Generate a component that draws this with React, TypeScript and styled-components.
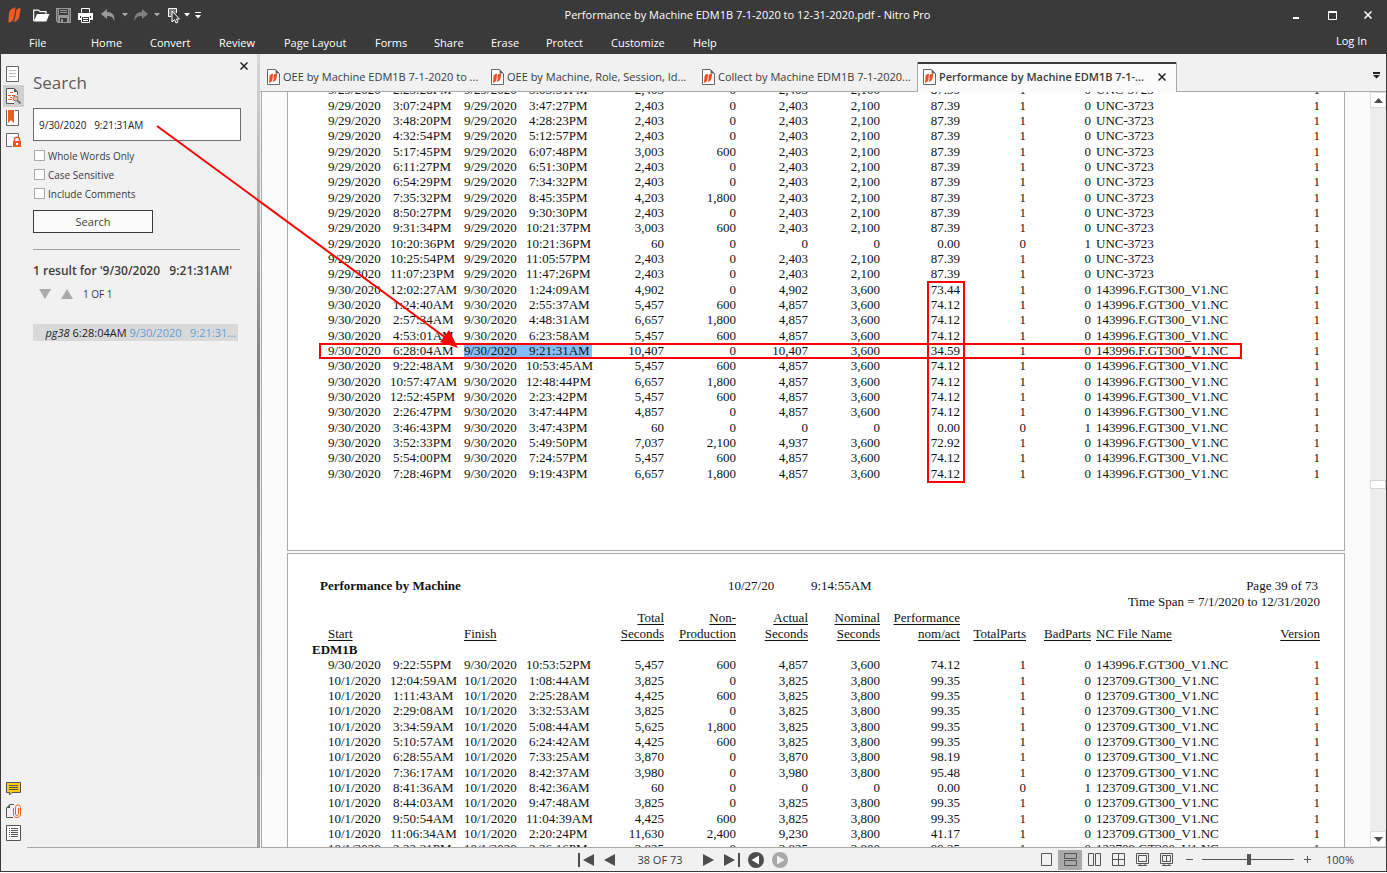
import React from "react";
import styled, { createGlobalStyle, css } from "styled-components";

const GlobalStyle = createGlobalStyle`
  * { box-sizing: border-box; }
  html, body, #root { height: 100%; }
  body { margin: 0; font-family: "Open Sans", "Noto Sans", sans-serif; font-size: 11px; color: #3b3b3c; overflow: hidden; }
  button, input { font: inherit; color: inherit; }
  button { border: 0; background: none; padding: 0; }
`;

const Window = styled.div`
  position: relative;
  display: flex;
  flex-direction: column;
  height: calc(100vh - 1px);
  border: 1px solid #3a3a3b;
  border-top: 0;
  background: #f1f1f1;
`;
const Header = styled.header`
  flex: none;
  height: 54px;
  background: #3a3a3b;
  color: #fff;
`;
const TitleBar = styled.div`
  display: grid;
  grid-template-columns: 308px 1fr 200px;
  align-items: center;
  height: 30px;
`;
const QuickTools = styled.div`
  display: flex;
  align-items: center;
  height: 30px;
`;
const ToolButton = styled.button<{ $w: number }>`
  width: ${(p) => p.$w}px;
  height: 22px;
  display: flex;
  align-items: center;
  justify-content: center;
`;
const Title = styled.div`
  padding-bottom: 2px;
  text-align: center;
  white-space: nowrap;
`;
const WindowButtons = styled.div`
  display: flex;
  justify-content: flex-end;
`;
const MenuBar = styled.nav`
  display: flex;
  align-items: center;
  height: 24px;
  padding: 0 19px 0 28px;
  white-space: nowrap;
`;
const MenuItem = styled.button<{ $w: number }>`
  width: ${(p) => p.$w}px;
  text-align: left;
`;
const LogIn = styled.button`
  margin-left: auto;
  padding-bottom: 4px;
`;

const Body = styled.div`
  flex: 1;
  min-height: 0;
  display: flex;
`;
const IconRail = styled.div`
  flex: none;
  width: 26px;
  display: flex;
  flex-direction: column;
  align-items: flex-start;
  padding: 9px 0 4px 2px;
`;
const RailButton = styled.button<{ $active?: boolean }>`
  width: 21px;
  height: 22px;
  padding-left: 3px;
  display: flex;
  align-items: center;
  background: ${(p) => (p.$active ? "#d0d0d0" : "transparent")};
`;
const RailSpace = styled.div`
  flex: 1;
`;
const SearchPanel = styled.section`
  flex: none;
  width: 230px;
  padding: 0 17px 0 6px;
  border-bottom: 1px solid #a9a9a9;
  display: flex;
  flex-direction: column;
`;
const CloseRow = styled.div`
  display: flex;
  justify-content: flex-end;
  height: 16px;
  padding-top: 6px;
  margin-right: -10px;
`;
const CloseButton = styled.button`
  width: 12px;
  height: 12px;
  display: flex;
  align-items: center;
  justify-content: center;
`;
const PanelTitle = styled.h1`
  margin: 0;
  font-size: 17px;
  font-weight: 400;
  color: #5a5a5c;
  line-height: 26px;
`;
const SearchBox = styled.input`
  height: 33px;
  width: 208px;
  margin: 12px 0 5px;
  padding: 0 5px;
  border: 1px solid #6d6d6d;
  background: #fff;
  color: #222;
  outline: 0;
  font-size: 10px;
  white-space: pre;
`;
const CheckLabel = styled.label`
  display: flex;
  align-items: center;
  gap: 3px;
  height: 19px;
  padding-left: 1px;
  font-size: 10px;
`;
const Check = styled.input`
  appearance: none;
  width: 11px;
  height: 11px;
  margin: 0;
  border: 1px solid #a9a9a9;
  background: #fff;
`;
const SearchButton = styled.button`
  width: 120px;
  height: 23px;
  margin-top: 7px;
  border: 1px solid #3a3a3b;
  background: #fbfbfb;
`;
const Divider = styled.hr`
  width: 207px;
  margin: 16px 0 12px;
  border: 0;
  border-top: 1px solid #a0a0a0;
`;
const ResultTitle = styled.h2`
  margin: 0;
  font-size: 12px;
  font-weight: 600;
  line-height: 18px;
  white-space: pre;
`;
const ResultNav = styled.div`
  display: flex;
  align-items: center;
  gap: 10px;
  height: 28px;
  padding-left: 6px;
  font-size: 10px;
`;
const ResultItem = styled.button`
  width: 205px;
  height: 17px;
  margin-top: 16px;
  padding-right: 2px;
  background: #d9d9d9;
  color: #222;
  text-align: right;
  white-space: pre;
  line-height: 17px;
`;
const Match = styled.span`
  color: #5b9fd8;
`;
const Splitter = styled.div`
  flex: none;
  width: 3px;
  background: linear-gradient(#d8d8d8, #808080 40%, #a0a0a0);
`;

const Main = styled.main`
  flex: 1;
  min-width: 0;
  display: flex;
  flex-direction: column;
`;
const TabBar = styled.div`
  flex: none;
  display: flex;
  height: 38px;
  padding: 8px 0 0 1px;
  border-bottom: 1px solid #a9a9a9;
`;
const Tab = styled.button<{ $w: number; $active?: boolean }>`
  width: ${(p) => p.$w}px;
  height: 29px;
  padding: 0 0 0 6px;
  display: flex;
  align-items: center;
  gap: 3px;
  white-space: nowrap;
  ${(p) =>
    p.$active &&
    css`
      height: 30px;
      padding: 0 0 1px 5px;
      background: #fbfbfb;
      border: 1px solid #a9a9a9;
      border-width: 0 1px;
      box-shadow: inset 0 2px #3a3a3b;
      font-weight: 600;
      position: relative;
    `}
`;
const TabClose = styled.span`
  margin: 0 10px 0 auto;
  display: flex;
`;
const TabMenu = styled.button`
  margin-left: auto;
  width: 20px;
  height: 26px;
  display: flex;
  align-items: center;
  justify-content: center;
`;
const Viewer = styled.div`
  flex: 1;
  min-height: 0;
  display: flex;
  margin-left: 1px;
  border-left: 1px solid #a9a9a9;
  border-bottom: 1px solid #a9a9a9;
`;
const Pages = styled.div`
  flex: 1;
  min-width: 0;
  overflow: hidden;
  padding: 0 25px;
  background: #fbfbfb;
`;
const Sheet = styled.article<{ $first?: boolean }>`
  position: relative;
  background: #fff;
  border: 1px solid #a9a9a9;
  border-top-width: ${(p) => (p.$first ? 0 : 1)}px;
  height: ${(p) => (p.$first ? 459 : 560)}px;
  margin-bottom: 2px;
  padding: 0 0 0 24px;
  overflow: hidden;
  color: #111;
  font-family: "Liberation Serif", serif;
  font-size: 13px;
`;
const DataTable = styled.table`
  border-collapse: collapse;
  table-layout: fixed;
  width: calc(100% - 24px);
  line-height: 15px;
`;
const Row = styled.tr<{ $tall?: boolean }>`
  height: ${(p) => (p.$tall ? 16 : 15)}px;
`;
const Cell = styled.td<{ $left?: number }>`
  padding: 0;
  vertical-align: top;
  white-space: pre;
  text-align: ${(p) => (p.$left === undefined ? "right" : "left")};
  padding-left: ${(p) => p.$left ?? 0}px;
`;
const Hit = styled.mark`
  background: #84bdf8;
  color: inherit;
  display: block;
  height: 13px;
  line-height: 13px;
  margin-top: 1px;
`;
const HitTime = styled(Hit)`
  margin-left: -10px;
  padding-left: 10px;
  width: 73px;
`;
const HeadCell = styled.th<{ $left?: number }>`
  padding: 0;
  padding-left: ${(p) => p.$left ?? 0}px;
  font-weight: 400;
  text-align: ${(p) => (p.$left === undefined ? "right" : "left")};
  text-decoration: underline;
  text-underline-offset: 2px;
  vertical-align: bottom;
  line-height: 16px;
  white-space: pre;
`;
const GroupCell = styled.th`
  height: 15px;
  padding: 0;
  text-align: left;
  font-weight: 700;
`;
const FirstTable = styled.div`
  margin-top: -10px;
`;
const ReportHead = styled.div`
  display: grid;
  grid-template-columns: 408px 83px auto 1fr;
  padding: 24px 24px 0 8px;
  line-height: 16px;
`;
const RightText = styled.div`
  text-align: right;
  padding-right: 2px;
`;
const TimeSpan = styled.div`
  text-align: right;
  padding-right: 24px;
  line-height: 16px;
`;
const ColumnMark = styled.div`
  position: absolute;
  left: 639px;
  top: 189px;
  width: 38px;
  height: 202px;
  border: 2px solid #f00;
`;
const RowMark = styled.div`
  position: absolute;
  left: 31px;
  top: 251px;
  width: 923px;
  height: 16px;
  border: 2px solid #f00;
`;
const Arrow = styled.svg`
  position: absolute;
  left: 150px;
  top: 120px;
  pointer-events: none;
`;
const ScrollBar = styled.div`
  flex: none;
  width: 16px;
  display: flex;
  flex-direction: column;
  background: #ededed;
`;
const ScrollButton = styled.button`
  height: 16px;
  border: 1px solid #dcdcdc;
  background: #fff;
  display: flex;
  align-items: center;
  justify-content: center;
`;
const ScrollTrack = styled.div<{ $grow: number }>`
  flex: ${(p) => p.$grow} 1 0;
`;
const ScrollThumb = styled.div`
  height: 9px;
  background: #fff;
  border: 1px solid #d4d4d4;
`;

const StatusBar = styled.footer`
  flex: none;
  height: 23px;
  display: grid;
  grid-template-columns: 1fr auto 1fr;
  align-items: center;
`;
const PageNav = styled.div`
  display: flex;
  align-items: center;
  grid-column: 2;
  padding-right: 17px;
`;
const PageCount = styled.span`
  width: 74px;
  text-align: center;
`;
const ViewTools = styled.div`
  display: flex;
  align-items: center;
  justify-content: flex-end;
  padding-right: 32px;
`;
const ViewButton = styled.button<{ $active?: boolean }>`
  width: 24px;
  height: 20px;
  display: flex;
  align-items: center;
  justify-content: center;
  background: ${(p) => (p.$active ? "#a9a9a9" : "transparent")};
`;
const Zoom = styled.input`
  appearance: none;
  width: 92px;
  height: 12px;
  margin: 0 2px;
  background: linear-gradient(#555, #555) center / 100% 1px no-repeat;
  &::-webkit-slider-thumb {
    appearance: none;
    width: 4px;
    height: 11px;
    background: #555;
  }
`;
const Percent = styled.span`
  width: 36px;
  text-align: right;
`;

const NitroMark = () => (
  <svg width="13" height="16" viewBox="0 0 13 16" fill="#f15a24">
    <path d="M1 6.500C1.300 3.200 4 .8 7.600 .4L6.100 10.200C5.600 13 3.500 15.200 .3 15.800Z" />
    <path d="M8.300 3.200C9.200 1.900 10.600 1.100 12.700 1L11.400 9.500C10.900 12.500 8.800 14.700 5.200 15.200C6.500 13.500 7 12 7.300 10Z" />
  </svg>
);
const CrossIcon = ({ size = 8, color = "#222" }) => (
  <svg width={size} height={size} viewBox="0 0 8 8" stroke={color} strokeWidth="1.500">
    <path d="M.5 .5 7.500 7.500M7.500 .5 .5 7.500" />
  </svg>
);
const CaretIcon = ({ color = "#ddd" }) => (
  <svg width="6" height="4" viewBox="0 0 6 4" fill={color}>
    <path d="M0 0H6L3 3.500Z" />
  </svg>
);
const FileIcon = () => (
  <svg width="13" height="16" viewBox="0 0 13 16">
    <path d="M.5 .5H8.500L12.500 4.500V15.500H.5Z" fill="#fff" stroke="#666" />
    <path d="M8.500 .5V4.500H12.500Z" fill="#666" />
    <path d="M2.500 7.500C2.700 6 4 5 6 4.800L5.500 10.500C5 12.500 4 13.500 2 13.800Z" fill="#f04e23" />
    <path d="M6.600 6.200C7.200 5.200 8.500 4.800 10.200 4.800L9.500 9.500C9 11.500 8 12.500 5.600 13C6.200 12 6.400 11 6.500 10Z" fill="#f04e23" />
  </svg>
);
const Triangle = ({ dir, w = 11, h = 12, color = "#4d4d4d" }: { dir: "l" | "r" | "u" | "d"; w?: number; h?: number; color?: string }) => {
  const d = {
    l: `M${w} 0V${h}L0 ${h / 2}Z`,
    r: `M0 0V${h}L${w} ${h / 2}Z`,
    u: `M0 ${h}H${w}L${w / 2} 0Z`,
    d: `M0 0H${w}L${w / 2} ${h}Z`,
  }[dir];
  return (
    <svg width={w} height={h} fill={color}>
      <path d={d} />
    </svg>
  );
};

type Entry = string[];
const parse = (text: string, date: string, file: string): Entry[] =>
  text
    .trim()
    .split("\n")
    .map((line) => {
      const [start, finish, ...values] = line.trim().split(/\s+/);
      return [date, start, date, finish, ...values, file];
    });

const september29 = parse(
  `2:25:28PM 3:05:31PM 2,403 0 2,403 2,100 87.39 1 0
  3:07:24PM 3:47:27PM 2,403 0 2,403 2,100 87.39 1 0
  3:48:20PM 4:28:23PM 2,403 0 2,403 2,100 87.39 1 0
  4:32:54PM 5:12:57PM 2,403 0 2,403 2,100 87.39 1 0
  5:17:45PM 6:07:48PM 3,003 600 2,403 2,100 87.39 1 0
  6:11:27PM 6:51:30PM 2,403 0 2,403 2,100 87.39 1 0
  6:54:29PM 7:34:32PM 2,403 0 2,403 2,100 87.39 1 0
  7:35:32PM 8:45:35PM 4,203 1,800 2,403 2,100 87.39 1 0
  8:50:27PM 9:30:30PM 2,403 0 2,403 2,100 87.39 1 0
  9:31:34PM 10:21:37PM 3,003 600 2,403 2,100 87.39 1 0
  10:20:36PM 10:21:36PM 60 0 0 0 0.00 0 1
  10:25:54PM 11:05:57PM 2,403 0 2,403 2,100 87.39 1 0
  11:07:23PM 11:47:26PM 2,403 0 2,403 2,100 87.39 1 0`,
  "9/29/2020",
  "UNC-3723"
);
const september30 = parse(
  `12:02:27AM 1:24:09AM 4,902 0 4,902 3,600 73.44 1 0
  1:24:40AM 2:55:37AM 5,457 600 4,857 3,600 74.12 1 0
  2:57:34AM 4:48:31AM 6,657 1,800 4,857 3,600 74.12 1 0
  4:53:01AM 6:23:58AM 5,457 600 4,857 3,600 74.12 1 0
  6:28:04AM 9:21:31AM 10,407 0 10,407 3,600 34.59 1 0
  9:22:48AM 10:53:45AM 5,457 600 4,857 3,600 74.12 1 0
  10:57:47AM 12:48:44PM 6,657 1,800 4,857 3,600 74.12 1 0
  12:52:45PM 2:23:42PM 5,457 600 4,857 3,600 74.12 1 0
  2:26:47PM 3:47:44PM 4,857 0 4,857 3,600 74.12 1 0
  3:46:43PM 3:47:43PM 60 0 0 0 0.00 0 1
  3:52:33PM 5:49:50PM 7,037 2,100 4,937 3,600 72.92 1 0
  5:54:00PM 7:24:57PM 5,457 600 4,857 3,600 74.12 1 0
  7:28:46PM 9:19:43PM 6,657 1,800 4,857 3,600 74.12 1 0`,
  "9/30/2020",
  "143996.F.GT300_V1.NC"
);
const pageTwo: Entry[] = [
  ...parse("9:22:55PM 10:53:52PM 5,457 600 4,857 3,600 74.12 1 0", "9/30/2020", "143996.F.GT300_V1.NC"),
  ...parse(
    `12:04:59AM 1:08:44AM 3,825 0 3,825 3,800 99.35 1 0
    1:11:43AM 2:25:28AM 4,425 600 3,825 3,800 99.35 1 0
    2:29:08AM 3:32:53AM 3,825 0 3,825 3,800 99.35 1 0
    3:34:59AM 5:08:44AM 5,625 1,800 3,825 3,800 99.35 1 0
    5:10:57AM 6:24:42AM 4,425 600 3,825 3,800 99.35 1 0
    6:28:55AM 7:33:25AM 3,870 0 3,870 3,800 98.19 1 0
    7:36:17AM 8:42:37AM 3,980 0 3,980 3,800 95.48 1 0
    8:41:36AM 8:42:36AM 60 0 0 0 0.00 0 1
    8:44:03AM 9:47:48AM 3,825 0 3,825 3,800 99.35 1 0
    9:50:54AM 11:04:39AM 4,425 600 3,825 3,800 99.35 1 0
    11:06:34AM 2:20:24PM 11,630 2,400 9,230 3,800 41.17 1 0
    2:22:31PM 3:26:16PM 3,825 0 3,825 3,800 99.35 1 0`,
    "10/1/2020",
    "123709.GT300_V1.NC"
  ),
];

const columnWidths = [71, 81, 55, 81, 64, 72, 72, 72, 80, 66, 65, 160];
const Columns = () => (
  <colgroup>
    {columnWidths.map((w, i) => (
      <col key={i} width={w} />
    ))}
    <col />
  </colgroup>
);
const timeInset = (time: string) => (time.length > 9 ? 7 : 10);
const DataRow = ({ entry, tall }: { entry: Entry; tall: boolean }) => {
  const [startDate, start, finishDate, finish, ...rest] = entry;
  const hit = finish === "9:21:31AM";
  return (
    <Row $tall={tall}>
      <Cell $left={16}>{startDate}</Cell>
      <Cell $left={timeInset(start)}>{start}</Cell>
      <Cell $left={0}>{hit ? <Hit>{finishDate}</Hit> : finishDate}</Cell>
      <Cell $left={timeInset(finish)}>{hit ? <HitTime>{finish}</HitTime> : finish}</Cell>
      {rest.slice(0, 7).map((value, i) => (
        <Cell key={i}>{value}</Cell>
      ))}
      <Cell $left={5}>{rest[7]}</Cell>
      <Cell>1</Cell>
    </Row>
  );
};

const menus: [string, number][] = [
  ["File", 62], ["Home", 59], ["Convert", 69], ["Review", 65], ["Page Layout", 91], ["Forms", 59],
  ["Share", 57], ["Erase", 55], ["Protect", 65], ["Customize", 82], ["Help", 50],
];
const headings: [string, number?][] = [
  ["Start", 16], ["", 0], ["Finish", 0], ["", 0], ["Total\nSeconds"], ["Non-\nProduction"], ["Actual\nSeconds"],
  ["Nominal\nSeconds"], ["Performance\nnom/act"], ["TotalParts"], ["BadParts"], ["NC File Name", 5], ["Version"],
];

export default function App() {
  return (
    <>
      <GlobalStyle />
      <Window>
        <Header>
          <TitleBar>
            <QuickTools>
              <ToolButton $w={27} aria-label="Nitro"><NitroMark /></ToolButton>
              <ToolButton $w={26} aria-label="Open">
                <svg width="17" height="13" viewBox="0 0 17 13"><path d="M.7 12V1.200H5.500L7 2.700H13V5" fill="none" stroke="#fff" strokeWidth="1.200" /><path d="M.8 12.500 4 5H16.500L13.300 12.500Z" fill="#fff" /></svg>
              </ToolButton>
              <ToolButton $w={18} aria-label="Save">
                <svg width="15" height="15" viewBox="0 0 15 15"><path d="M0 0H15V15H2L0 13Z" fill="#999" /><path d="M3 1H12V7H3ZM4 10H11V14H4Z" fill="#3a3a3b" /><path d="M4 2.500H11M4 4.500H11" stroke="#999" /><path d="M5 11H7V14H5Z" fill="#999" /><path d="M1 1H2V13H1ZM13 1H14V14H13Z" fill="#6a6a6a" /></svg>
              </ToolButton>
              <ToolButton $w={26} aria-label="Print">
                <svg width="15" height="15" viewBox="0 0 15 15"><path d="M0 5H15V12H0Z" fill="#fff" /><path d="M3.500 4.500V.5H11.500V4.500" fill="none" stroke="#fff" /><path d="M2 8H13V10H2Z" fill="#3a3a3b" /><path d="M3.500 8.500H11.500V14.500H3.500Z" fill="#3a3a3b" stroke="#fff" /><path d="M5 10.500H10M5 12.500H10" stroke="#fff" /></svg>
              </ToolButton>
              <ToolButton $w={20} aria-label="Undo">
                <svg width="15" height="12" viewBox="0 0 15 12" fill="#999"><path d="M6 0V3C11 3 14 6 13.500 12C12 8 10 7 6 7V10L0 5Z" /></svg>
              </ToolButton>
              <ToolButton $w={13} aria-label="Undo history"><CaretIcon color="#aaa" /></ToolButton>
              <ToolButton $w={19} aria-label="Redo">
                <svg width="15" height="12" viewBox="0 0 15 12" fill="#808080"><path d="M9 0V3C4 3 1 6 1.500 12C3 8 5 7 9 7V10L15 5Z" /></svg>
              </ToolButton>
              <ToolButton $w={13} aria-label="Redo history"><CaretIcon color="#aaa" /></ToolButton>
              <ToolButton $w={20} aria-label="Select">
                <svg width="13" height="17" viewBox="0 0 13 17"><path d="M4 9.500H1.500V1.500H9.500V6" fill="#777" stroke="#fff" /><path d="M5 4V15L7.500 12.500 9 16 11 15 9.500 12H12.500Z" fill="#3a3a3b" stroke="#fff" /></svg>
              </ToolButton>
              <ToolButton $w={8} aria-label="Select options"><CaretIcon color="#fff" /></ToolButton>
              <ToolButton $w={14} aria-label="Customize toolbar">
                <svg width="6" height="7" viewBox="0 0 6 7" fill="#fff"><path d="M0 0H6V1H0ZM0 3H6L3 6.500Z" /></svg>
              </ToolButton>
            </QuickTools>
            <Title>Performance by Machine EDM1B 7-1-2020 to 12-31-2020.pdf - Nitro Pro</Title>
            <WindowButtons>
              <ToolButton $w={36} aria-label="Minimize"><svg width="6" height="8"><path d="M0 6H6V8H0Z" fill="#fff" /></svg></ToolButton>
              <ToolButton $w={36} aria-label="Maximize"><svg width="9" height="9"><path d="M.5 1H8.500V8.500H.5Z" fill="none" stroke="#fff" /><path d="M0 0H9V2H0Z" fill="#fff" /></svg></ToolButton>
              <ToolButton $w={36} aria-label="Close"><CrossIcon color="#fff" /></ToolButton>
            </WindowButtons>
          </TitleBar>
          <MenuBar>
            {menus.map(([name, w]) => (
              <MenuItem key={name} $w={w}>{name}</MenuItem>
            ))}
            <LogIn>Log In</LogIn>
          </MenuBar>
        </Header>

        <Body>
          <IconRail>
            <RailButton aria-label="Pages">
              <svg width="13" height="16" fill="none" stroke="#666"><path d="M.5 .5H12.500V15.500H.5Z" fill="#fff" /><path d="M3 4.500H10M3 7.500H10M3 10.500H10" stroke="#bbb" /></svg>
            </RailButton>
            <RailButton $active aria-label="Search">
              <svg width="15" height="16" fill="none" stroke="#555"><path d="M8 15.500H.5V.5H8L11.500 4V7" fill="#fff" /><path d="M8 0V4H12Z" fill="#555" stroke="none" /><path d="M4 4.500H7M2 7.500H5M2 11.500H6" stroke="#f15a24" /><path d="M6 7.500H9M4 9.500H6" stroke="#f15a24" /><circle cx="9.500" cy="10.500" r="2.500" fill="#f7b59c" stroke="#777" /><path d="M11.500 12.500 14.500 15.500" strokeWidth="1.500" /></svg>
            </RailButton>
            <RailButton aria-label="Bookmarks">
              <svg width="13" height="16"><path d="M.5 0V15.500H12.500V.5H9" fill="#fff" stroke="#666" /><path d="M2 0H8V13L5 10 2 13Z" fill="#f15a24" /></svg>
            </RailButton>
            <RailButton aria-label="Security">
              <svg width="15" height="15"><path d="M6 13.500H.5V.5H12.500V5" fill="#fff" stroke="#666" /><path d="M7 8H15V14H7Z" fill="#f15a24" /><path d="M8.500 8V6C8.500 3.500 13.500 3.500 13.500 6V8" fill="none" stroke="#f15a24" strokeWidth="1.500" /><path d="M10 10H12V12H10Z" fill="#fff" /></svg>
            </RailButton>
            <RailSpace />
            <RailButton aria-label="Comments">
              <svg width="15" height="14"><path d="M.5 .5H14.500V10.500H6L3.500 13V10.500H.5Z" fill="#ffcb05" stroke="#555" /><path d="M3 3.500H12M3 5.500H12M3 7.500H12" stroke="#555" /></svg>
            </RailButton>
            <RailButton aria-label="Attachments">
              <svg width="15" height="14" fill="none"><path d="M4 .5H8M7 13.500H.5V4" stroke="#555" /><path d="M0 4H4V0Z" fill="#555" /><path d="M7.500 4V10.500C7.500 14.500 14.500 14.500 14.500 10.500V3.500C14.500 0 9.500 0 9.500 3.500V10C9.500 12 12.500 12 12.500 10V4" stroke="#f15a24" /></svg>
            </RailButton>
            <RailButton aria-label="Contents">
              <svg width="15" height="16" fill="none" stroke="#555"><path d="M.5 .5H14.500V15.500H.5Z" fill="#fff" /><path d="M3 3.500H4M5 3.500H12M3 5.500H4M5 5.500H12M3 7.500H4M5 7.500H12M3 9.500H4M5 9.500H12M3 11.500H4M5 11.500H12" /></svg>
            </RailButton>
          </IconRail>

          <SearchPanel>
            <CloseRow><CloseButton aria-label="Close panel"><CrossIcon /></CloseButton></CloseRow>
            <PanelTitle>Search</PanelTitle>
            <SearchBox aria-label="Search text" defaultValue={"9/30/2020   9:21:31AM"} />
            {["Whole Words Only", "Case Sensitive", "Include Comments"].map((label) => (
              <CheckLabel key={label}><Check type="checkbox" />{label}</CheckLabel>
            ))}
            <SearchButton>Search</SearchButton>
            <Divider />
            <ResultTitle>1 result for '9/30/2020   9:21:31AM'</ResultTitle>
            <ResultNav>
              <CloseButton aria-label="Next result"><Triangle dir="d" w={12} h={10} color="#a9a9a9" /></CloseButton>
              <CloseButton aria-label="Previous result"><Triangle dir="u" w={12} h={10} color="#a9a9a9" /></CloseButton>
              <span>1 OF 1</span>
            </ResultNav>
            <ResultItem><em>pg38</em> 6:28:04AM <Match>9/30/2020   9:21:31...</Match></ResultItem>
          </SearchPanel>
          <Splitter />

          <Main>
            <TabBar>
              <Tab $w={224}><FileIcon />OEE by Machine EDM1B 7-1-2020 to ...</Tab>
              <Tab $w={211}><FileIcon />OEE by Machine, Role, Session, Id...</Tab>
              <Tab $w={221}><FileIcon />Collect by Machine EDM1B 7-1-2020...</Tab>
              <Tab $w={260} $active><FileIcon />Performance by Machine EDM1B 7-1-...<TabClose><CrossIcon /></TabClose></Tab>
              <TabMenu aria-label="Tab list"><svg width="7" height="7" fill="#222"><path d="M0 0H7V2H0ZM0 3H7L3.500 6.500Z" /></svg></TabMenu>
            </TabBar>
            <Viewer>
              <Pages>
                <Sheet $first>
                  <FirstTable>
                    <DataTable>
                      <Columns />
                      <tbody>
                        {[...september29, ...september30].map((entry, i) => (
                          <DataRow key={i} entry={entry} tall={i % 3 === 0} />
                        ))}
                      </tbody>
                    </DataTable>
                  </FirstTable>
                  <ColumnMark />
                  <RowMark />
                </Sheet>
                <Sheet>
                  <ReportHead>
                    <strong>Performance by Machine</strong>
                    <span>10/27/20</span>
                    <span>9:14:55AM</span>
                    <RightText>Page 39 of 73</RightText>
                  </ReportHead>
                  <TimeSpan>Time Span = 7/1/2020 to 12/31/2020</TimeSpan>
                  <DataTable>
                    <Columns />
                    <thead>
                      <tr>
                        {headings.map(([text, left], i) => (
                          <HeadCell key={i} $left={left}>{text}</HeadCell>
                        ))}
                      </tr>
                      <tr><GroupCell colSpan={13}>EDM1B</GroupCell></tr>
                    </thead>
                    <tbody>
                      {pageTwo.map((entry, i) => (
                        <DataRow key={i} entry={entry} tall={i % 3 === 0} />
                      ))}
                    </tbody>
                  </DataTable>
                </Sheet>
              </Pages>
              <ScrollBar>
                <ScrollButton aria-label="Scroll up"><Triangle dir="u" w={9} h={5} /></ScrollButton>
                <ScrollTrack $grow={371} />
                <ScrollThumb />
                <ScrollTrack $grow={342} />
                <ScrollButton aria-label="Scroll down"><Triangle dir="d" w={9} h={5} /></ScrollButton>
              </ScrollBar>
            </Viewer>
          </Main>
        </Body>

        <StatusBar>
          <PageNav>
            <ToolButton $w={18} aria-label="First page"><svg width="16" height="14" fill="#4d4d4d"><path d="M0 0H2V14H0ZM16 1V13L5 7Z" /></svg></ToolButton>
            <ToolButton $w={28} aria-label="Previous page"><Triangle dir="l" /></ToolButton>
            <PageCount>38 OF 73</PageCount>
            <ToolButton $w={22} aria-label="Next page"><Triangle dir="r" /></ToolButton>
            <ToolButton $w={26} aria-label="Last page"><svg width="16" height="14" fill="#4d4d4d"><path d="M14 0H16V14H14ZM0 1V13L11 7Z" /></svg></ToolButton>
            <ToolButton $w={22} aria-label="Previous view"><svg width="16" height="16"><circle cx="8" cy="8" r="8" fill="#4d4d4d" /><path d="M11 3.500V12.500L3.500 8Z" fill="#fff" /></svg></ToolButton>
            <ToolButton $w={26} aria-label="Next view"><svg width="16" height="16"><circle cx="8" cy="8" r="8" fill="#a9a9a9" /><path d="M5 3.500V12.500L12.500 8Z" fill="#f1f1f1" /></svg></ToolButton>
          </PageNav>
          <ViewTools>
            <ViewButton aria-label="Single page"><svg width="11" height="13" fill="none" stroke="#555"><path d="M.5 .5H10.500V12.500H.5Z" /></svg></ViewButton>
            <ViewButton $active aria-label="Continuous"><svg width="13" height="13" fill="none" stroke="#555"><path d="M.5 .5H12.500V5.500H.5ZM.5 7.500H12.500V12.500H.5Z" /></svg></ViewButton>
            <ViewButton aria-label="Facing"><svg width="13" height="13" fill="none" stroke="#555"><path d="M.5 .5H5.500V12.500H.5ZM7.500 .5H12.500V12.500H7.500Z" /></svg></ViewButton>
            <ViewButton aria-label="Continuous facing"><svg width="13" height="13" fill="none" stroke="#555"><path d="M.5 .5H12.500V12.500H.5ZM6.500 0V13M0 6.500H13" /></svg></ViewButton>
            <ViewButton aria-label="Full screen"><svg width="13" height="13" fill="none" stroke="#555"><path d="M.5 .5H12.500V10.500H.5ZM2.500 2.500H10.500V8.500H2.500ZM4 10V12.500M9 10V12.500M2 12.500H11" /></svg></ViewButton>
            <ViewButton aria-label="Full screen facing"><svg width="13" height="13" fill="none" stroke="#555"><path d="M.5 .5H12.500V10.500H.5ZM2.500 2.500H10.500V8.500H2.500ZM6.500 2V9M4 10V12.500M9 10V12.500M2 12.500H11" /></svg></ViewButton>
            <ToolButton $w={22} aria-label="Zoom out"><svg width="7" height="7" stroke="#555"><path d="M0 3.500H7" /></svg></ToolButton>
            <Zoom type="range" aria-label="Zoom" defaultValue={51} />
            <ToolButton $w={22} aria-label="Zoom in"><svg width="7" height="7" stroke="#555"><path d="M0 3.500H7M3.500 0V7" /></svg></ToolButton>
            <Percent>100%</Percent>
          </ViewTools>
        </StatusBar>
        <Arrow width="312" height="232">
          <path d="M6 6 295 218" stroke="#f00" strokeWidth="2" />
          <path d="M307 228 289 222 298 210Z" fill="#f00" />
        </Arrow>
      </Window>
    </>
  );
}
